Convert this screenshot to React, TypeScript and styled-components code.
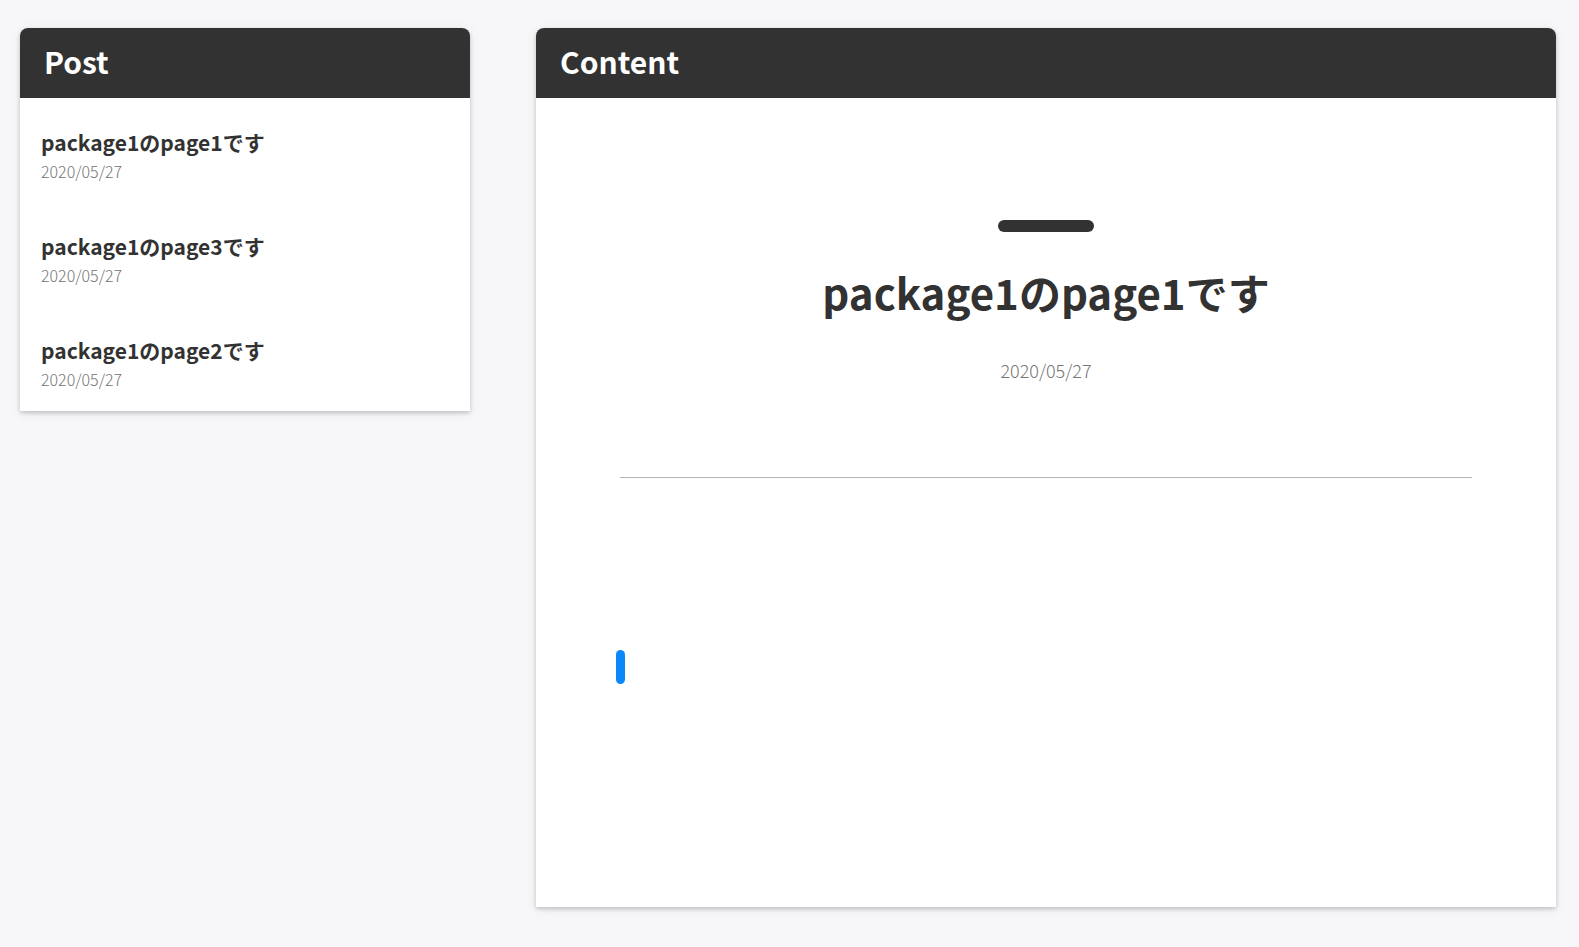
import React from "react";
import styled, { createGlobalStyle } from "styled-components";

const GlobalStyle = createGlobalStyle`
  *, *::before, *::after {
    box-sizing: border-box;
  }

  body {
    margin: 0;
    background: #f7f7fa;
    color: #323232;
    font-family: "Noto Sans CJK JP", "Noto Sans", sans-serif;
  }

  h1, h2, h3, p, ul {
    margin: 0;
    padding: 0;
  }
`;

const Page = styled.div`
  display: grid;
  grid-template-columns: 15fr 34fr;
  align-items: start;
  gap: 66px;
  min-height: 100vh;
  padding: 28px 23px 40px 20px;
`;

const Card = styled.section`
  background: #fff;
  border-radius: 8px 8px 0 0;
  box-shadow: 0 2px 4px rgba(0, 0, 0, 0.2), 0 2px 14px rgba(0, 0, 0, 0.06);
`;

const CardHeader = styled.header`
  display: flex;
  align-items: center;
  height: 70px;
  padding: 0 24px 4px;
  border-radius: 8px 8px 0 0;
  background: #323232;
`;

const CardTitle = styled.h2`
  color: #fff;
  font-size: 30px;
  font-weight: 700;
  line-height: 40px;
`;

const PostList = styled.ul`
  display: flex;
  flex-direction: column;
  gap: 47px;
  padding: 28px 21px 20px;
  list-style: none;
`;

const PostLink = styled.a`
  display: block;
  color: inherit;
  text-decoration: none;
`;

const PostTitle = styled.h3`
  font-size: 21px;
  font-weight: 700;
  line-height: 33px;
`;

const DateText = styled.time<{ $size: number }>`
  display: block;
  color: #757575;
  font-size: ${({ $size }) => $size}px;
  font-weight: 300;
  line-height: 24px;
`;

const Article = styled.article`
  min-height: calc(100vh - 138px);
  padding: 122px 84px 84px;
`;

const ArticleHeader = styled.div`
  display: flex;
  flex-direction: column;
  align-items: center;
  padding-bottom: 95px;
  border-bottom: 1px solid #b4b4b4;
`;

const Accent = styled.span`
  width: 96px;
  height: 12px;
  border-radius: 6px;
  background: #323232;
`;

const ArticleTitle = styled.h1`
  margin: 30px 0 36px;
  font-size: 42px;
  font-weight: 700;
  line-height: 60px;
  text-align: center;
`;

const ArticleBody = styled.div`
  padding-top: 172px;
`;

const HeadingMark = styled.h2`
  width: 9px;
  height: 34px;
  margin-left: -4px;
  border-radius: 5px;
  background: #0a88fa;
`;

const posts = [
  { id: "page1", title: "package1のpage1です", date: "2020/05/27" },
  { id: "page3", title: "package1のpage3です", date: "2020/05/27" },
  { id: "page2", title: "package1のpage2です", date: "2020/05/27" },
];

export default function App() {
  const current = posts[0];
  return (
    <>
      <GlobalStyle />
      <Page>
        <Card as="nav">
          <CardHeader>
            <CardTitle>Post</CardTitle>
          </CardHeader>
          <PostList>
            {posts.map((post) => (
              <li key={post.id}>
                <PostLink href={`#${post.id}`}>
                  <PostTitle>{post.title}</PostTitle>
                  <DateText $size={16}>{post.date}</DateText>
                </PostLink>
              </li>
            ))}
          </PostList>
        </Card>
        <Card as="main">
          <CardHeader>
            <CardTitle>Content</CardTitle>
          </CardHeader>
          <Article>
            <ArticleHeader>
              <Accent />
              <ArticleTitle>{current.title}</ArticleTitle>
              <DateText $size={18}>{current.date}</DateText>
            </ArticleHeader>
            <ArticleBody>
              <HeadingMark />
            </ArticleBody>
          </Article>
        </Card>
      </Page>
    </>
  );
}
